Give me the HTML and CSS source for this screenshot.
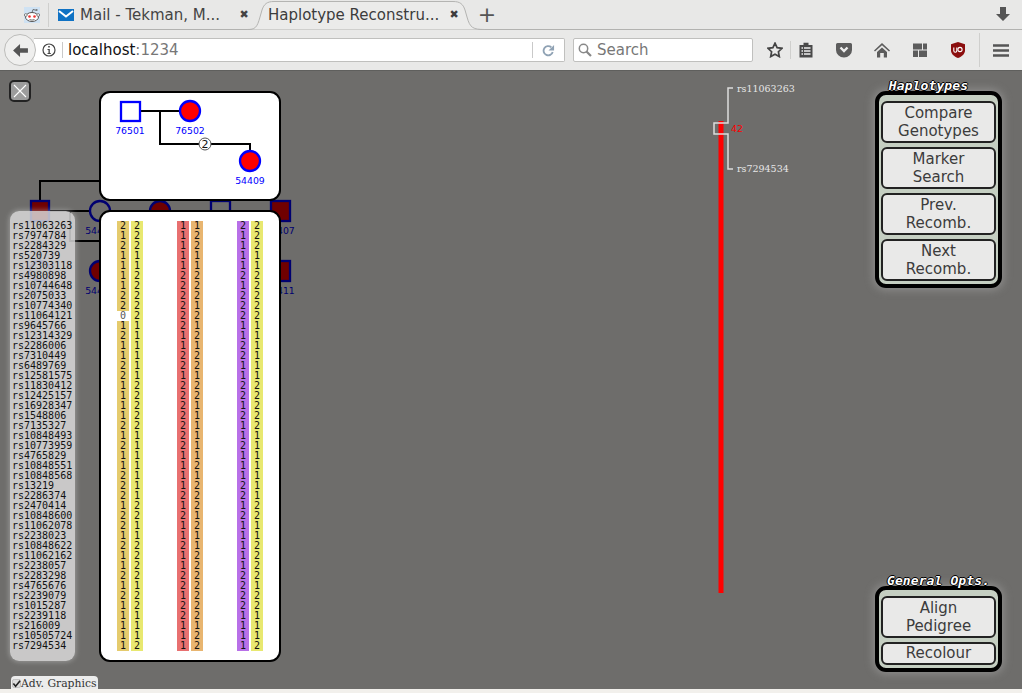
FILE: index.html
```html
<!DOCTYPE html>
<html lang="en">
<head>
    <meta charset="UTF-8">
    <title>Haplotype Reconstruction</title>
    <link rel="stylesheet" href="styles.css">
</head>
<body>
    <div class="tabstrip">
        <div class="pinned-tab">
            <svg class="icon16" viewBox="0 0 16 16">
                <rect width="16" height="16" fill="#cfe2f3"/>
                <ellipse cx="8" cy="10" rx="6.5" ry="4.5" fill="#fff" stroke="#555"/>
                <circle cx="1.8" cy="8" r="1.4" fill="#fff" stroke="#555" stroke-width=".7"/>
                <circle cx="14.2" cy="8" r="1.4" fill="#fff" stroke="#555" stroke-width=".7"/>
                <circle cx="5.5" cy="9.5" r="1.3" fill="#e33"/>
                <circle cx="10.5" cy="9.5" r="1.3" fill="#e33"/>
                <path d="M5.5 12.5q2.5 1.2 5 0M8 5.5l1-3 3 .7" fill="none" stroke="#555" stroke-width=".8"/>
                <circle cx="12.6" cy="3" r="1" fill="#777"/>
            </svg>
        </div>
        <div class="tab">
            <svg class="icon-mail" viewBox="0 0 16 12">
                <rect width="16" height="12" fill="#0f72c4"/>
                <path d="M1 2l7 5.5L15 2" fill="none" stroke="#fff" stroke-width="2"/>
            </svg>
            <span class="tab-title">Mail - Tekman, M...</span>
            <span class="tab-close">✖</span>
        </div>
        <div class="tab tab-active">
            <svg class="tab-shape" viewBox="0 0 238 30">
                <path d="M0 29.5C8 29.5 10 28 13 17L15 10C17 4 20 1.500 27 1.500H206C213 1.500 216 4 218 10L220 17C223 28 226 29.500 238 29.500" fill="#ebebea" stroke="#b4b4b2"/>
            </svg>
            <span class="tab-title">Haplotype Reconstru...</span>
            <span class="tab-close">✖</span>
        </div>
        <span class="new-tab">+</span>
        <svg class="icon-download" viewBox="0 0 14 15"><path d="M4 0h6v7h4l-7 7-7-7h4z" fill="#555"/></svg>
    </div>

    <div class="navbar">
        <div class="back-btn">
            <svg viewBox="0 0 16 14"><path d="M7.500 0L0 7l7.500 7V9.500H16v-5H7.500z" fill="#555"/></svg>
        </div>
        <div class="urlbar">
            <svg class="icon-info" viewBox="0 0 14 14">
                <circle cx="7" cy="7" r="6" fill="none" stroke="#444" stroke-width="1.200"/>
                <path d="M6.200 3h1.600v1.600H6.200zM5.500 6h2.300v4h1v1H5.500v-1h1V7h-1z" fill="#444"/>
            </svg>
            <span class="url-sep"></span>
            <span class="url-host">localhost<span class="url-port">:1234</span></span>
            <span class="url-sep url-sep-end"></span>
            <svg class="icon-reload" viewBox="0 0 14 14">
                <path d="M11.500 8.500A5 5 0 1 1 10 3.500" fill="none" stroke="#8fa2b4" stroke-width="2"/>
                <path d="M13 1v6H7z" fill="#8fa2b4"/>
            </svg>
        </div>
        <div class="searchbar">
            <svg class="icon-search" viewBox="0 0 14 14">
                <circle cx="5.500" cy="5.500" r="4.200" fill="none" stroke="#888" stroke-width="1.500"/>
                <path d="M8.500 8.500L13 13" stroke="#888" stroke-width="2.200"/>
            </svg>
            <span>Search</span>
        </div>
        <div class="toolbar">
            <svg class="tool-star" viewBox="0 0 16 16"><path d="M8 1.200l2.100 4.500 4.900.6-3.600 3.400.9 4.900L8 12.200l-4.300 2.400.9-4.900L1 6.300l4.900-.6z" fill="none" stroke="#444" stroke-width="1.700"/></svg>
            <span class="tool-sep"></span>
            <svg class="tool" viewBox="0 0 16 16"><path d="M1.500 3H5.500V.800h5V3h4v12.500h-13z" fill="#4a4a4a"/><path d="M3.500 6h1.500M6 6h6.500M3.500 9h1.500M6 9h6.500M3.500 12h1.500M6 12h6.500" stroke="#eee" stroke-width="1.300"/></svg>
            <svg class="tool tool-gap" viewBox="0 0 16 16"><path d="M1.500 1h13A1.500 1.500 0 0 1 16 2.500V8a8 7.500 0 0 1-16 0V2.500A1.500 1.500 0 0 1 1.500 1z" fill="#5c5c5c"/><path d="M4.500 5.500L8 9l3.500-3.500" fill="none" stroke="#eee" stroke-width="2.400"/></svg>
            <svg class="tool tool-gap" viewBox="0 0 16 16"><path d="M8 1L0 8.500l1 1 7-6.300 7 6.300 1-1z" fill="#5c5c5c"/><path d="M3 10l5-4.600 5 4.600v5.500h-3.200V11H6.200v4.500H3z" fill="#5c5c5c"/></svg>
            <svg class="tool tool-gap" viewBox="0 0 16 16"><path d="M1 1.500h9v6H1zM11 1.500h4v6h-4zM1 8.500h5v6.500H1zM7 8.500h8v6.500H7z" fill="#5c5c5c"/></svg>
            <svg class="tool tool-gap" viewBox="0 0 16 16"><path d="M8 0l7 2.200v6.300c0 3.200-3 6-7 7.500-4-1.500-7-4.300-7-7.500V2.200z" fill="#8b0e0e"/><path d="M3.800 5.500v3.200a1.500 1.500 0 0 0 3 0V5.500" fill="none" stroke="#fff" stroke-width="1.100"/><circle cx="10" cy="7.500" r="2.100" fill="none" stroke="#fff" stroke-width="1.100"/></svg>
            <span class="tool-sep tool-sep-tall"></span>
            <svg class="tool-menu" viewBox="0 0 16 13"><path d="M.5 1.500h15M.5 6.500h15M.5 11.500h15" stroke="#555" stroke-width="2.600" stroke-linecap="round"/></svg>
        </div>
    </div>

    <div class="stage">
        <svg class="pedigree-back" viewBox="0 0 1022 619">
            <path class="ped-lines" d="M40 131V110H100M50 140H90M110 140H150M170 140H210M230 140H270M70 140V170H100M40 170V190"/>
            <rect class="ped-node" x="31" y="130" width="18" height="20" fill="#700000"/>
            <circle class="ped-node" cx="100" cy="140" r="10" fill="none"/>
            <circle class="ped-node" cx="160" cy="140" r="10" fill="#700000"/>
            <rect class="ped-node" x="211" y="130" width="19" height="20" fill="none"/>
            <rect class="ped-node" x="271" y="130" width="19" height="20" fill="#700000"/>
            <circle class="ped-node" cx="40" cy="200" r="10" fill="none"/>
            <circle class="ped-node" cx="100" cy="200" r="10" fill="#700000"/>
            <rect class="ped-node" x="271" y="190" width="19" height="20" fill="#700000"/>
            <text class="ped-label" x="100" y="163">54405</text>
            <text class="ped-label" x="280" y="163">54407</text>
            <text class="ped-label" x="100" y="223">54410</text>
            <text class="ped-label" x="280" y="223">54411</text>
            <text class="ped-label" x="40" y="223">54408</text>
        </svg>

        <button class="close-btn">
            <svg viewBox="0 0 14 14"><path d="M1 1l12 12M13 1L1 13" stroke="#fff" stroke-width="1.100"/></svg>
        </button>

        <div class="ped-card">
            <svg class="ped-card-svg" viewBox="0 0 178 106">
                <path class="ped-line" d="M39 18H79M59 18V51H149V58"/>
                <rect class="ped-top-node" x="20" y="9" width="19" height="19" fill="#fff"/>
                <circle class="ped-top-node" cx="89" cy="18" r="10" fill="#f00"/>
                <circle class="ped-top-node" cx="149" cy="68" r="10" fill="#f00"/>
                <circle class="ped-twins" cx="104" cy="51" r="6"/>
                <text class="ped-twins-text" x="104" y="55">2</text>
                <text class="ped-top-label" x="29" y="41">76501</text>
                <text class="ped-top-label" x="89" y="41">76502</text>
                <text class="ped-top-label" x="149" y="91">54409</text>
            </svg>
        </div>

        <div class="marker-list">rs11063263
rs7974784
rs2284329
rs520739
rs12303118
rs4980898
rs10744648
rs2075033
rs10774340
rs11064121
rs9645766
rs12314329
rs2286006
rs7310449
rs6489769
rs12581575
rs11830412
rs12425157
rs16928347
rs1548806
rs7135327
rs10848493
rs10773959
rs4765829
rs10848551
rs10848568
rs13219
rs2286374
rs2470414
rs10848600
rs11062078
rs2238023
rs10848622
rs11062162
rs2238057
rs2283298
rs4765676
rs2239079
rs1015287
rs2239118
rs216009
rs10505724
rs7294534</div>

        <div class="hap-card">
            <div class="hap-pair">
                <div class="allele gold">2
1
2
1
1
1
1
2
2
<span class="no-call">0</span>
1
2
1
1
2
2
1
1
1
1
2
1
2
1
1
2
2
2
1
2
2
1
2
1
1
2
1
2
1
1
1
1
1</div>
                <div class="allele yellow">2
2
2
1
1
2
2
2
2
2
1
1
1
1
1
1
2
2
2
2
2
1
1
1
1
1
1
1
2
2
1
1
2
2
2
2
1
2
2
1
1
1
2</div>
            </div>
            <div class="hap-pair">
                <div class="allele red">1
1
1
1
1
2
2
2
2
2
2
1
1
2
2
1
2
2
2
2
2
2
2
1
1
1
1
2
1
2
1
1
2
1
1
2
2
1
2
2
1
1
1</div>
                <div class="allele orange">1
2
2
1
1
2
2
2
1
2
1
2
1
2
2
1
2
2
1
1
1
1
1
1
2
1
2
2
2
1
2
1
1
2
2
2
2
2
2
2
1
2
2</div>
            </div>
            <div class="hap-pair">
                <div class="allele purple">2
1
1
1
1
2
1
2
2
2
1
1
2
2
1
1
2
2
1
2
1
1
2
1
1
1
2
2
1
2
1
1
1
1
1
2
2
2
2
1
1
1
1</div>
                <div class="allele yellow">2
2
2
1
1
2
2
2
2
2
1
1
1
1
1
1
2
2
2
2
2
1
1
1
1
1
1
1
2
2
1
1
2
2
2
2
1
2
2
1
1
1
2</div>
            </div>
        </div>

        <label class="adv-toggle">
            <svg viewBox="0 0 10 10"><rect x=".5" y=".5" width="9" height="9" rx="2" fill="#ddd" stroke="#bbb"/><path d="M1.500 5l2.500 3L9 2" fill="none" stroke="#222" stroke-width="1.800"/></svg>
            <span>Adv. Graphics</span>
        </label>

        <svg class="chrom" viewBox="0 0 100 530">
            <path class="chrom-bar" d="M8 51V523"/>
            <path class="chrom-bracket" d="M20 18H15V53H1V64H15V99H20"/>
            <text class="chrom-marker" x="24" y="22">rs11063263</text>
            <text class="chrom-marker" x="24" y="102">rs7294534</text>
            <text class="chrom-count" x="18" y="62">42</text>
        </svg>

        <div class="panel panel-haplotypes">
            <div class="panel-title panel-title-shifted">Haplotypes</div>
            <div class="panel-box">
                <button class="panel-btn">Compare<br>Genotypes</button>
                <button class="panel-btn">Marker<br>Search</button>
                <button class="panel-btn">Prev.<br>Recomb.</button>
                <button class="panel-btn">Next<br>Recomb.</button>
            </div>
        </div>

        <div class="panel panel-general">
            <div class="panel-title">General Opts.</div>
            <div class="panel-box">
                <button class="panel-btn">Align<br>Pedigree</button>
                <button class="panel-btn panel-btn-short">Recolour</button>
            </div>
        </div>
    </div>
    <div class="page-end"></div>
</body>
</html>
```

FILE: styles.css
```css
* {
    margin: 0;
    padding: 0;
    box-sizing: border-box;
}

body {
    width: 1022px;
    height: 693px;
    overflow: hidden;
    background: #f2f0ec;
    font-family: "DejaVu Sans", sans-serif;
}

/* browser tabs */
.tabstrip {
    display: flex;
    align-items: center;
    height: 30px;
    background: #e8e8e7;
    border-bottom: 1px solid #b2b2b0;
    color: #444;
    font-size: 15px;
}

.pinned-tab {
    display: flex;
    align-items: center;
    width: 49px;
    height: 24px;
    padding-left: 24px;
    border-right: 1px solid #cfcfcd;
}

.icon16 {
    width: 16px;
    height: 16px;
}

.tab {
    position: relative;
    display: flex;
    align-items: center;
    height: 29px;
    width: 199px;
    padding-left: 9px;
}

.icon-mail {
    width: 16px;
    height: 12px;
    margin-right: 6px;
    flex: none;
}

.tab-title {
    position: relative;
    flex: 1;
    white-space: nowrap;
}

.tab-close {
    position: relative;
    width: 16px;
    margin-right: -4px;
    font-size: 11px;
    text-align: center;
}

.tab-active {
    width: 238px;
    padding-left: 21px;
    margin-right: -9px;
    height: 30px;
    margin-left: -1px;
    padding-right: 27px;
    color: #3c3c3c;
}

.tab-shape {
    position: absolute;
    left: 0;
    top: 0;
    width: 238px;
    height: 30px;
}

.new-tab {
    width: 22px;
    text-align: center;
    font-size: 22px;
    line-height: 22px;
    color: #555;
}

.icon-download {
    width: 14px;
    height: 15px;
    margin-left: auto;
    margin-right: 12px;
}

/* address bar row */
.navbar {
    position: relative;
    display: flex;
    align-items: center;
    height: 40px;
    padding-left: 4px;
    background: #e9e9e8;
}

.back-btn {
    position: relative;
    z-index: 1;
    display: flex;
    align-items: center;
    justify-content: center;
    width: 32px;
    height: 32px;
    border: 1px solid #bcbcba;
    border-radius: 50%;
    background: #efefee;
}

.back-btn svg {
    width: 15px;
    height: 13px;
}

.urlbar {
    display: flex;
    align-items: center;
    width: 531px;
    height: 24px;
    margin-left: -2px;
    padding-left: 8px;
    background: #fff;
    border: 1px solid #c0c0be;
    border-left: none;
    border-radius: 0 2px 2px 0;
    font-size: 15px;
}

.icon-info {
    width: 14px;
    height: 14px;
    flex: none;
}

.url-sep {
    width: 1px;
    height: 16px;
    margin: 0 5px 0 6px;
    background: #c9c9c9;
}

.url-sep-end {
    margin: 0 0 0 auto;
}

.url-host {
    color: #111;
}

.url-port {
    color: #777;
}

.icon-reload {
    width: 13px;
    height: 13px;
    margin: 0 9px 0 9px;
}

.searchbar {
    display: flex;
    align-items: center;
    gap: 5px;
    width: 180px;
    height: 24px;
    margin-left: 8px;
    padding-left: 4px;
    background: #fff;
    border: 1px solid #c0c0be;
    border-radius: 2px;
    color: #777;
    font-size: 15px;
}

.icon-search {
    width: 14px;
    height: 14px;
}

.toolbar {
    display: flex;
    align-items: center;
    height: 40px;
    margin-left: 14px;
}

.tool-star {
    width: 16px;
    height: 16px;
}

.tool-sep {
    width: 1px;
    height: 18px;
    margin: 0 7px 0 7px;
    background: #cfcfcd;
}

.tool {
    width: 16px;
    height: 16px;
}

.tool-gap {
    margin-left: 22px;
}

.tool-sep-tall {
    height: 34px;
    margin: 0 13px 0 13px;
}

.tool-menu {
    width: 16px;
    height: 13px;
}

/* the app canvas */
.stage {
    position: relative;
    height: 619px;
    background: #6e6d6b;
    border-top: 1px solid #5f5f5d;
    overflow: hidden;
}

.pedigree-back {
    position: absolute;
    left: 0;
    top: 0;
    width: 1022px;
    height: 619px;
}

.ped-lines {
    fill: none;
    stroke: #000;
    stroke-width: 2px;
}

.ped-node {
    stroke: #000070;
    stroke-width: 2.300px;
}

.ped-label {
    fill: #000070;
    font-size: 9.300px;
    text-anchor: middle;
}

.close-btn {
    position: absolute;
    left: 9px;
    top: 9px;
    display: flex;
    align-items: center;
    justify-content: center;
    width: 22px;
    height: 22px;
    background: #9c9c9c;
    border: 2px solid #222;
    border-radius: 5px;
}

.close-btn svg {
    width: 14px;
    height: 14px;
}

.ped-card,
.hap-card {
    position: absolute;
    left: 99px;
    width: 182px;
    background: #fff;
    border: 2px solid #000;
    border-radius: 11px;
}

.ped-card {
    top: 20px;
    height: 110px;
}

.ped-card-svg {
    display: block;
    width: 178px;
    height: 106px;
}

.ped-line {
    fill: none;
    stroke: #000;
    stroke-width: 2px;
}

.ped-top-node {
    stroke: #0000ff;
    stroke-width: 2.300px;
}

.ped-twins {
    fill: #fff;
    stroke: #555;
    stroke-width: 1px;
}

.ped-twins-text {
    fill: #111;
    font-size: 11px;
    text-anchor: middle;
}

.ped-top-label {
    fill: #0000ff;
    font-size: 9.300px;
    text-anchor: middle;
}

.marker-list {
    position: absolute;
    left: 10px;
    top: 140px;
    width: 65px;
    height: 450px;
    padding: 10px 0 0 2px;
    background: rgba(218, 218, 218, 0.84);
    border-radius: 9px;
    box-shadow: 0 0 5px 1px rgba(218, 218, 218, 0.4);
    color: #111;
    font-family: "DejaVu Sans Mono", monospace;
    font-size: 10px;
    line-height: 10px;
    white-space: pre-line;
}

.hap-card {
    top: 139px;
    height: 452px;
    display: flex;
    gap: 34px;
    padding: 9px 0 0 16px;
}

.hap-pair {
    display: flex;
    gap: 2px;
}

.allele {
    width: 12px;
    height: 430px;
    color: #111;
    font-family: "DejaVu Sans Mono", monospace;
    font-size: 10px;
    line-height: 10px;
    text-align: center;
    white-space: pre-line;
}

.gold { background: #e5cb6d; }
.yellow { background: #e8e870; }
.red { background: #e87070; }
.orange { background: #e8b570; }
.purple { background: #b870e8; }

.no-call {
    display: inline-block;
    width: 100%;
    height: 10px;
    background: #fff;
    color: #555;
    vertical-align: top;
}

.adv-toggle {
    position: absolute;
    left: 11px;
    top: 605px;
    display: flex;
    align-items: center;
    width: 87px;
    height: 14px;
    padding-left: 1px;
    background: #ececec;
    border-radius: 4px 4px 0 0;
    color: #333;
    font-family: "DejaVu Serif", serif;
    font-size: 10.800px;
    white-space: nowrap;
}

.adv-toggle svg {
    width: 9px;
    height: 9px;
    flex: none;
}

.chrom {
    position: absolute;
    left: 713px;
    top: -1px;
    width: 100px;
    height: 530px;
}

.chrom-bar {
    stroke: #f00;
    stroke-width: 5px;
}

.chrom-bracket {
    fill: none;
    stroke: #ddd;
    stroke-width: 1.500px;
}

.chrom-marker {
    fill: #e6e6e6;
    font-family: "DejaVu Serif", serif;
    font-size: 9.500px;
}

.chrom-count {
    fill: #f00;
    font-size: 9.500px;
}

/* side panels */
.panel {
    position: absolute;
    left: 875px;
    width: 127px;
}

.panel-haplotypes { top: 6px; }
.panel-general { top: 501px; }

.panel-title {
    height: 14px;
    color: #fff;
    font-family: "DejaVu Sans Mono", monospace;
    font-size: 13px;
    font-weight: bold;
    font-style: italic;
    letter-spacing: 0.1px;
    line-height: 18px;
    text-align: center;
    text-shadow: 1px 0 0 #000, -1px 0 0 #000, 0 1px 0 #000, 0 -1px 0 #000;
    white-space: nowrap;
}

.panel-title-shifted {
    padding-right: 20px;
}

.panel-box {
    display: flex;
    flex-direction: column;
    gap: 4px;
    padding: 6px 2px 3px;
    background: #c5cfc2;
    border: 4px solid #000;
    border-radius: 11px;
    box-shadow: 0 0 8px 2px rgba(200, 200, 200, 0.35);
}

.panel-btn {
    width: 115px;
    height: 42px;
    background: #e9e9e8;
    border: 2px solid #222;
    border-radius: 6px;
    color: #3c3c3c;
    font-family: "DejaVu Sans", sans-serif;
    font-size: 15px;
    line-height: 18px;
}

.panel-btn-short {
    height: 23px;
    line-height: 17px;
}

.page-end {
    height: 4px;
}
```
